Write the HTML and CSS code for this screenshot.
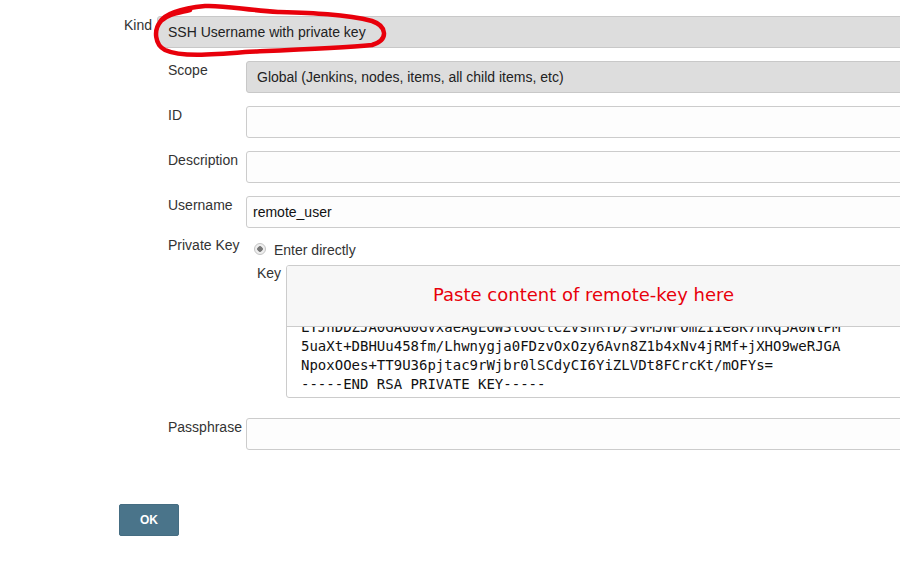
FILE: index.html
```html
<!DOCTYPE html>
<html>
<head>
<meta charset="utf-8">
<link rel="stylesheet" href="styles.css">
</head>
<body>
<div class="page">
  <div class="row kind-row">
    <label class="kind-lbl">Kind</label>
    <div class="select">SSH Username with private key</div>
  </div>
  <div class="nested">
    <div class="row">
      <label class="lbl">Scope</label>
      <div class="select">Global (Jenkins, nodes, items, all child items, etc)</div>
    </div>
    <div class="row">
      <label class="lbl">ID</label>
      <div class="input"></div>
    </div>
    <div class="row">
      <label class="lbl">Description</label>
      <div class="input"></div>
    </div>
    <div class="row">
      <label class="lbl">Username</label>
      <div class="input">remote_user</div>
    </div>
    <div class="row pk-row">
      <label class="lbl">Private Key</label>
      <div class="pk">
        <div class="radio-line"><span class="radio"></span><span>Enter directly</span></div>
        <div class="key-row">
          <label class="key-lbl">Key</label>
          <div class="textarea">
            <div class="lines">
              <div class="ln">MIIEpAIBAAKCAQEAzX9bK3qLm1VQyHc2R8o4TnWfG7dJp0XsLkYvE5aRtQ2wNhBu</div>
              <div class="ln">LYJhDDZJA0GAG0GVxaeAgEOW3t6GctCZvshRYD/3vMJNFOmZ11e8K7hKq5A0NtPM</div>
              <div class="ln">5uaXt+DBHUu458fm/Lhwnygja0FDzvOxOzy6Avn8Z1b4xNv4jRMf+jXHO9weRJGA</div>
              <div class="ln">NpoxOOes+TT9U36pjtac9rWjbr0lSCdyCI6YiZLVDt8FCrcKt/mOFYs=</div>
              <div class="ln">-----END RSA PRIVATE KEY-----</div>
            </div>
            <div class="note">Paste content of remote-key here</div>
          </div>
        </div>
      </div>
    </div>
    <div class="row pass-row">
      <label class="lbl">Passphrase</label>
      <div class="input"></div>
    </div>
  </div>
  <button class="ok">OK</button>
  <svg class="scribble" width="900" height="70" viewBox="0 0 900 70">
    <path d="M 160 22 C 166 12, 185 8, 205 6 C 225 5, 245 10, 278 12 C 310 13, 345 14, 372 21 C 387 26, 389 40, 372 45 C 340 48, 290 50, 245 52 C 210 55, 180 57, 165 50 C 155 45, 153 30, 161 21 C 168 14, 178 13, 190 10" fill="none" stroke="#e8000b" stroke-width="4.5" stroke-linecap="round" stroke-linejoin="round"/>
  </svg>
</div>
</body>
</html>
```
FILE: styles.css
```css
html, body {
  margin: 0;
  padding: 0;
  background: #fff;
  overflow: hidden;
}
.page {
  position: relative;
  width: 960px;
  height: 583px;
  font-family: "Liberation Sans", Arial, sans-serif;
  font-size: 14px;
  color: #333;
}
.row {
  display: flex;
  align-items: flex-start;
  margin-top: 13px;
}
.kind-row {
  margin-top: 0;
  padding-top: 16px;
  padding-left: 124px;
}
.kind-lbl {
  width: 33px;
  line-height: 17px;
  padding-top: 1px;
}
.nested {
  padding-left: 168px;
}
.lbl {
  width: 78px;
  flex: none;
  line-height: 17px;
  padding-top: 1px;
}
.select, .input {
  flex: 1;
  height: 30px;
  line-height: 30px;
  border: 1px solid #ccc;
  border-radius: 3px;
  box-sizing: content-box;
}
.select {
  background: #ddd;
  color: #222;
  padding-left: 10px;
  border-color: #c8c8c8;
}
.input {
  background: #fdfdfd;
  color: #111;
  padding-left: 6px;
}
.pk-row {
  margin-top: 8px;
}
.pk {
  flex: 1;
  padding-top: 4px;
}
.radio-line {
  display: flex;
  align-items: center;
  height: 20px;
  padding-left: 8px;
  color: #333;
}
.radio {
  width: 10px;
  height: 10px;
  border-radius: 50%;
  border: 1px solid #c4c4c4;
  background: radial-gradient(circle, #777 0 2.5px, #eee 3px);
  margin-right: 8px;
  margin-top: -3px;
}
.key-row {
  display: flex;
  margin-top: 5px;
}
.key-lbl {
  flex: none;
  padding-left: 11px;
  box-sizing: border-box;
  width: 40px;
  line-height: 17px;
}
.textarea {
  position: relative;
  flex: 1;
  height: 131px;
  border: 1px solid #ccc;
  border-radius: 3px;
  background: #fff;
  overflow: hidden;
  display: flex;
  flex-direction: column;
  justify-content: flex-end;
}
.lines {
  flex: none;
  font-family: "DejaVu Sans Mono", monospace;
  font-size: 14px;
  line-height: 19px;
  color: #111;
  padding-left: 14px;
  padding-bottom: 3px;
}
.ln {
  white-space: pre;
}
.note {
  position: absolute;
  top: 0;
  left: 0;
  right: 0;
  height: 60px;
  background: #f7f7f7;
  border-bottom: 1px solid #ccc;
  font-family: "DejaVu Sans", sans-serif;
  font-size: 18px;
  line-height: 58px;
  color: #e8000b;
  padding-left: 146px;
}
.pass-row {
  margin-top: 20px;
}
.ok {
  display: block;
  margin-top: 54px;
  margin-left: 119px;
  width: 60px;
  height: 32px;
  border: 1px solid #456d82;
  border-radius: 2px;
  background: #4a748a;
  color: #fff;
  font-family: "Liberation Sans", Arial, sans-serif;
  font-weight: bold;
  font-size: 12px;
  padding: 0;
}
.scribble {
  position: absolute;
  left: 0;
  top: 0;
  pointer-events: none;
}
```
